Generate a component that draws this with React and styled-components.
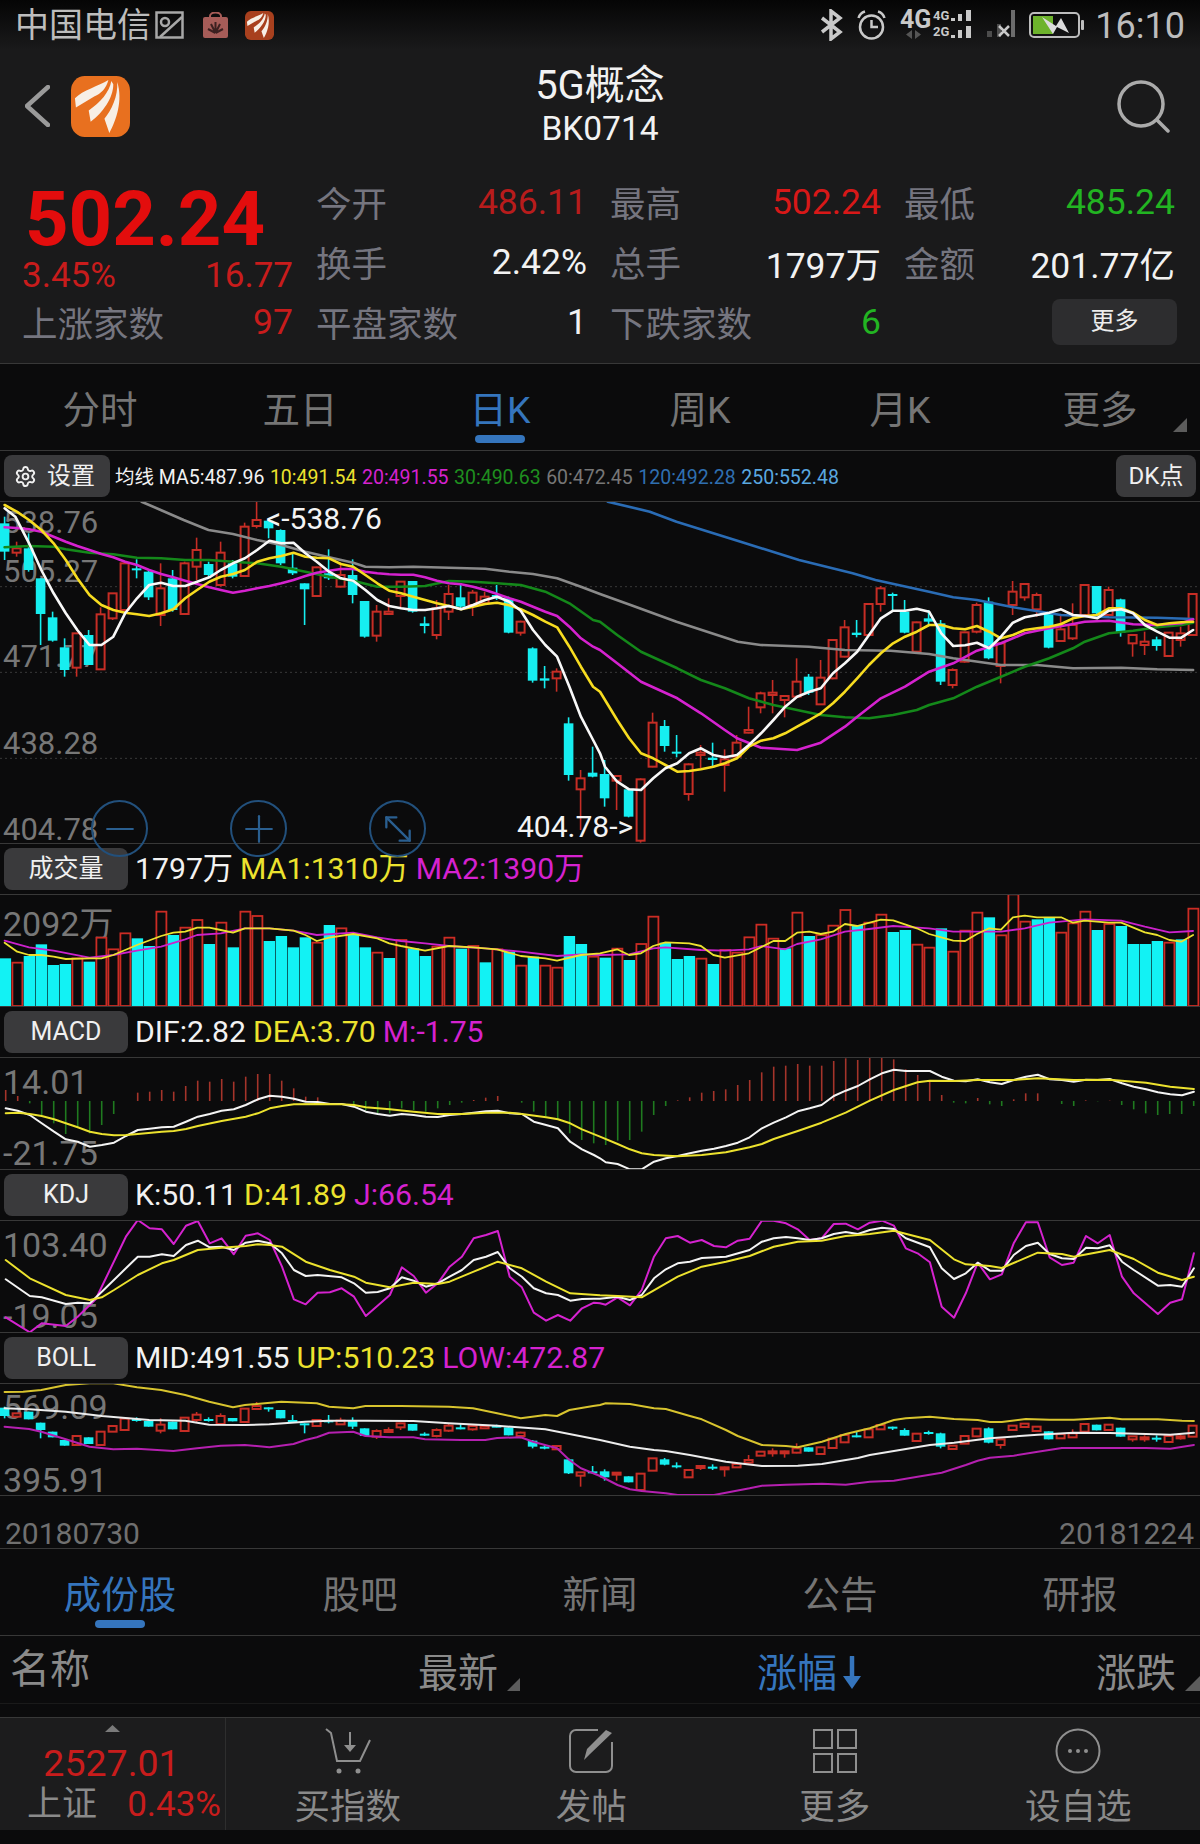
import React from 'react';
import styled, { createGlobalStyle } from 'styled-components';
import { Settings, Minus, Plus, MoveDiagonal2 } from 'lucide-react';

const RED = '#c81c1c';
const GREEN = '#22b422';
const BLUE = '#3575bd';
const YELLOW = '#ece22e';
const MAGENTA = '#d522cf';
const CHART_BG = '#0b0b0c';
const LINE = '#383838';

const GlobalStyle = createGlobalStyle`
  * { box-sizing: border-box; }
  html, body { margin: 0; padding: 0; background: #000; }
  body { font-family: Roboto, "Noto Sans CJK SC", sans-serif; }
`;

const Page = styled.div`
  width: 1200px;
  height: 1844px;
  overflow: hidden;
  background: ${CHART_BG};
`;

const TopPanel = styled.div`
  background: #1a1a1b;
`;

const StatusBar = styled.div`
  display: flex;
  align-items: center;
  height: 50px;
  padding: 0 15px 0 15px;
  background: linear-gradient(#050505, #1a1a1b);
  color: #bdbdbd;
`;

const Carrier = styled.span`
  font-size: 34px;
  line-height: 34px;
`;

const StatusIcon = styled.svg`
  display: block;
  flex: none;
  margin-left: ${(p) => p.$gap || 0}px;
`;

const StatusRight = styled.div`
  display: flex;
  align-items: center;
  gap: 14px;
  margin-left: auto;
`;

const Clock = styled.span`
  margin: 2px 0 0 -3px;
  font-size: 36px;
  line-height: 36px;
`;

const NavHeader = styled.div`
  position: relative;
  display: flex;
  align-items: center;
  justify-content: space-between;
  height: 120px;
  padding: 0 30px 8px 25px;
`;

const NavLeft = styled.div`
  display: flex;
  align-items: center;
  gap: 21px;
`;

const NavTitle = styled.div`
  position: absolute;
  left: 0;
  right: 0;
  top: 14px;
  text-align: center;
  color: #f2f2f2;
`;

const TitleMain = styled.div`
  font-size: 40px;
  line-height: 44px;
`;

const TitleCode = styled.div`
  font-size: 33.5px;
  line-height: 42px;
`;

const QuoteGrid = styled.div`
  display: grid;
  grid-template-columns: repeat(4, 271px);
  grid-template-rows: repeat(3, 60px);
  column-gap: 23px;
  padding: 2px 0 11px 22px;
  border-bottom: 1px solid ${LINE};
`;

const PriceCell = styled.div`
  grid-row: span 2;
  color: ${RED};
`;

const BigPrice = styled.div`
  margin-top: 9px;
  padding-left: 3px;
  font-size: 76px;
  line-height: 76px;
  font-weight: 700;
  color: #e30d0d;
`;

const ChangeRow = styled.div`
  display: flex;
  justify-content: space-between;
  font-size: 35px;
  line-height: 38px;
`;

const Cell = styled.div`
  display: flex;
  align-items: center;
  justify-content: space-between;
`;

const CellLabel = styled.span`
  margin-bottom: 2px;
  font-size: 35.5px;
  color: #75757f;
`;

const CellValue = styled.span`
  font-size: 35.5px;
  color: ${(p) => p.$color || '#f2f2f2'};
`;

const MoreButton = styled.div`
  justify-self: end;
  align-self: center;
  width: 125px;
  height: 46px;
  margin-right: -2px;
  border-radius: 8px;
  background: #2d2d2f;
  color: #ededed;
  font-size: 24px;
  line-height: 44px;
  text-align: center;
`;

const TabBar = styled.div`
  display: grid;
  grid-template-columns: repeat(${(p) => p.$count}, 1fr);
  height: 87px;
  border-bottom: 1px solid ${LINE};
`;

const Tab = styled.div`
  position: relative;
  display: flex;
  align-items: center;
  justify-content: center;
  padding-bottom: 2px;
  font-size: 37.5px;
  color: ${(p) => (p.$active ? BLUE : '#757575')};

  &::after {
    content: '';
    display: ${(p) => (p.$active ? 'block' : 'none')};
    position: absolute;
    left: 50%;
    top: 71px;
    width: 50px;
    height: 8px;
    margin-left: -25px;
    border-radius: 4px;
    background: ${BLUE};
  }
`;

const Corner = styled.i`
  display: block;
  flex: none;
  width: ${(p) => p.$size || 14}px;
  height: ${(p) => p.$size || 14}px;
  background: #5c5c5c;
  clip-path: polygon(100% 0, 100% 100%, 0 100%);
`;

const TabCorner = styled(Corner)`
  position: absolute;
  right: 13px;
  top: 54px;
`;

const MaRow = styled.div`
  display: flex;
  align-items: center;
  height: 51px;
  padding: 0 4px;
  border-bottom: 1px solid ${LINE};
`;

const Pill = styled.div`
  display: flex;
  align-items: center;
  justify-content: center;
  flex: none;
  gap: ${(p) => p.$gap || 0}px;
  width: ${(p) => p.$w}px;
  height: 42px;
  padding-right: ${(p) => p.$pr || 0}px;
  border-radius: 8px;
  background: #3a3a3c;
  color: #f0f0f0;
  font-size: 24px;
  line-height: 24px;
`;

const PaneTag = styled(Pill)`
  font-size: 25px;
`;

const MaText = styled.div`
  display: flex;
  gap: 5.5px;
  margin: 4px 0 0 5px;
  font-size: 19.5px;
  line-height: 24px;
  white-space: nowrap;
`;

const Tinted = styled.span`
  color: ${(p) => p.$color};
`;

const DkPill = styled(Pill)`
  margin-left: auto;
`;

const ChartBox = styled.div`
  position: relative;
  height: ${(p) => p.$h}px;
  border-bottom: 1px solid ${LINE};
`;

const ChartSvg = styled.svg`
  position: relative;
  z-index: 1;
  display: block;
`;

const AxisLabel = styled.span`
  position: absolute;
  left: 3px;
  top: ${(p) => p.$top}px;
  font-size: ${(p) => p.$size || 34}px;
  line-height: ${(p) => p.$size || 34}px;
  color: #777;
  white-space: nowrap;
`;

const Callout = styled.span`
  position: absolute;
  z-index: 2;
  left: ${(p) => p.$left}px;
  top: ${(p) => p.$top}px;
  font-size: 30px;
  line-height: 30px;
  color: #f4f4f4;
`;

const ZoomButton = styled.div`
  position: absolute;
  z-index: 3;
  left: ${(p) => p.$left}px;
  top: 298px;
  display: flex;
  align-items: center;
  justify-content: center;
  width: 57px;
  height: 57px;
  border: 2px solid #22507c;
  border-radius: 50%;
  color: #2a5f90;
`;

const PaneHead = styled.div`
  display: flex;
  align-items: center;
  gap: 7px;
  height: 51px;
  padding: 0 0 0 4px;
  border-bottom: 1px solid ${LINE};
`;

const PaneValues = styled.div`
  display: flex;
  gap: 7px;
  font-size: 30.2px;
  line-height: 36px;
  white-space: nowrap;
`;

const DateRow = styled.div`
  display: flex;
  align-items: center;
  justify-content: space-between;
  height: 53px;
  padding: 24px 6px 0 5px;
  border-bottom: 1px solid ${LINE};
  font-size: 30px;
  line-height: 30px;
  color: #707070;
`;

const ListHead = styled.div`
  display: grid;
  grid-template-columns: 418px 339px 339px 104px;
  height: 68px;
  border-bottom: 1px solid #1a1a1a;
  font-size: 40px;
  color: #8a8a8a;
`;

const ListName = styled.div`
  padding-left: 10px;
  line-height: 68px;
`;

const ListCol = styled.div`
  display: flex;
  align-items: flex-end;
  gap: 9px;
  padding-bottom: 13px;
  white-space: nowrap;
  color: ${(p) => p.$color || '#8a8a8a'};

  span {
    height: 52px;
    line-height: 70px;
  }
`;

const SortArrow = styled.svg`
  display: block;
  flex: none;
  margin: 0 0 1px -4px;
`;

const ListGap = styled.div`
  height: 13px;
`;

const BottomBar = styled.div`
  display: flex;
  height: 113px;
  border-top: 1px solid ${LINE};
  background: #1c1c1d;
`;

const IndexCell = styled.div`
  flex: none;
  width: 226px;
  padding-top: 7px;
  border-right: 1px solid #2e2e2e;
`;

const UpMark = styled.i`
  display: block;
  width: 15px;
  height: 7px;
  margin: 0 auto;
  background: #7a7a7a;
  clip-path: polygon(50% 0, 100% 100%, 0 100%);
`;

const IndexPrice = styled.div`
  margin-top: 13px;
  padding-right: 2px;
  font-size: 37.5px;
  line-height: 36px;
  text-align: center;
  color: ${RED};
`;

const IndexRow = styled.div`
  display: flex;
  justify-content: space-between;
  margin-top: 7px;
  padding: 0 4px 0 27px;
  font-size: 35px;
  line-height: 34px;
  color: #8a8a8a;
`;

const BottomNav = styled.div`
  display: grid;
  flex: 1;
  grid-template-columns: repeat(4, 1fr);
`;

const BottomItem = styled.div`
  display: flex;
  flex-direction: column;
  align-items: center;
  padding-top: 10px;
  color: #8a8a8a;
`;

const BottomLabel = styled.span`
  margin-top: 16px;
  font-size: 35.5px;
  line-height: 34px;
`;

// chart data is read off the reference, x from the 2.613x crops, y from the 3x crops
const SCALE_X = 2.6133;
const RIGHT_PART = 1568;
const W = 1200;

const toPoints = (left, right, shift) => {
  const out = [];
  for (let i = 0; i < left.length; i += 2) {
    out.push(`${(left[i] / SCALE_X).toFixed(1)},${(left[i + 1] / 3 - shift).toFixed(1)}`);
  }
  for (let i = 0; i < right.length; i += 2) {
    out.push(`${((right[i] + RIGHT_PART) / SCALE_X).toFixed(1)},${(right[i + 1] / 3 - shift).toFixed(1)}`);
  }
  return out.join(' ');
};

const Curve = ({ left = [], right = [], shift, color, width = 2 }) => (
  <polyline
    points={toPoints(left, right, shift)}
    fill="none"
    stroke={color}
    strokeWidth={width}
    strokeLinejoin="round"
    strokeLinecap="round"
  />
);

const candleX = (i) => 4.6 + 12 * i;

const Candles = ({ data, shift }) =>
  data.map(([up, high, top, bottom, low], i) => {
    const x = candleX(i);
    const color = up ? '#c62d25' : '#16eef0';
    const y1 = top / 3 - shift;
    const y2 = bottom / 3 - shift;
    return (
      <g key={i}>
        <line x1={x} x2={x} y1={high / 3 - shift} y2={low / 3 - shift} stroke={color} strokeWidth="1.6" />
        {up ? (
          <rect x={x - 4} y={y1} width="8" height={Math.max(y2 - y1, 2)} fill={CHART_BG} stroke={color} strokeWidth="2" />
        ) : (
          <rect x={x - 4.8} y={y1} width="9.6" height={Math.max(y2 - y1, 2)} fill={color} />
        )}
      </g>
    );
  });

const MAIN_CANDLES = [
  [0,440,460,545,570],[1,515,535,548,560],[0,490,535,600,605],[0,625,625,732,825],[0,725,742,812,815],
  [0,805,832,900,920],[1,790,790,893,920],[0,780,795,885,885],[1,712,733,898,900],[1,670,670,745,750],
  [1,575,580,720,725],[0,568,595,600,625],[0,600,605,682,690],[1,580,655,735,768],[0,600,625,720,725],
  [1,575,580,732,735],[1,503,540,590,630],[0,575,582,615,620],[1,515,548,645,650],[0,570,580,620,625],
  [1,458,470,618,620],[1,395,450,468,475],[0,445,452,475,505],[0,478,480,580,585],[0,550,593,610,615],
  [0,640,640,658,765],[1,590,592,678,680],[0,538,610,625,630],[1,578,615,650,652],[0,568,615,675,700],
  [0,693,693,800,803],[1,705,725,797,815],[1,685,725,732,735],[1,635,635,678,715],[0,633,633,725,728],
  [0,740,760,768,790],[1,690,715,795,808],[1,645,672,725,750],[0,640,682,710,720],[1,660,668,705,738],
  [1,665,680,700,705],[0,645,675,685,690],[0,680,685,788,790],[1,752,755,788,797],[0,832,835,932,938],
  [0,888,925,932,955],[1,895,905,925,965],[0,1042,1060,1215,1232],[1,1200,1225,1258,1380],[0,1130,1208,1220,1222],
  [0,1170,1212,1285,1310],[1,1215,1218,1232,1320],[0,1255,1258,1340,1342],[1,1225,1228,1412,1418],[1,1028,1058,1190,1192],
  [0,1050,1068,1128,1145],[0,1095,1145,1150,1162],[1,1180,1183,1272,1292],[1,1125,1148,1155,1195],[0,1118,1163,1170,1188],
  [1,1138,1168,1185,1265],[1,1095,1118,1160,1165],[1,1010,1080,1088,1090],[1,965,970,1012,1030],[1,930,968,975,1030],
  [1,975,978,990,1042],[1,865,935,980,982],[0,912,920,968,975],[1,870,923,1003,1005],[1,808,810,925,928],
  [1,750,772,860,862],[0,750,788,795,802],[1,700,702,795,798],[1,648,655,702,725],[0,668,672,677,720],
  [0,690,725,788,790],[1,755,757,845,848],[0,720,745,755,762],[0,750,760,935,945],[1,895,900,945,955],
  [1,785,787,875,878],[1,698,705,785,790],[0,682,695,865,868],[1,818,820,888,940],[1,633,665,705,735],
  [1,640,642,682,692],[1,668,675,718,740],[0,728,730,833,835],[1,735,778,813,815],[1,700,765,805,810],
  [1,643,645,735,737],[0,648,648,730,735],[1,650,660,735,738],[0,686,688,788,800],[1,793,795,820,860],
  [1,785,815,825,855],[0,800,808,828,842],[1,786,788,858,860],[1,770,790,810,830],[1,670,672,795,798],
];

const BOLL_CANDLES = [
  [0,230,233,258,265],[1,250,250,260,260],[0,245,245,268,268],[0,278,278,300,325],[0,305,305,322,322],
  [0,330,330,347,347],[1,318,318,345,345],[0,322,322,342,342],[1,305,305,345,345],[1,288,288,305,305],
  [1,266,266,300,300],[0,262,267,270,275],[0,273,273,290,290],[1,265,284,302,310],[0,275,275,298,298],
  [1,263,263,303,303],[1,246,254,270,278],[0,262,267,271,275],[1,250,258,282,285],[0,264,264,274,274],
  [1,236,236,276,276],[1,216,228,237,240],[0,232,232,238,245],[0,240,240,265,265],[0,255,270,272,273],
  [0,280,280,283,310],[1,270,270,288,288],[0,255,270,277,280],[1,263,272,283,285],[0,262,272,290,297],
  [0,295,295,318,318],[1,298,303,320,327],[1,292,300,302,305],[1,278,280,292,300],[0,282,282,302,302],
  [0,307,311,314,318],[1,295,300,318,322],[1,280,287,302,306],[0,280,292,297,298],[1,285,288,298,302],
  [1,285,288,295,297],[0,284,287,290,292],[0,292,292,316,316],[1,305,308,318,325],[0,330,332,350,355],
  [0,345,350,352,358],[1,348,348,358,358],[0,385,388,430,432],[1,427,427,437,470],[0,408,424,428,430],
  [0,418,424,442,452],[1,428,428,431,452],[0,439,439,457,457],[1,431,431,480,480],[1,385,385,422,422],
  [0,384,388,404,406],[0,397,406,408,415],[1,420,420,442,442],[1,405,408,412,420],[0,403,410,412,420],
  [1,410,412,418,440],[1,402,402,412,412],[1,375,390,398,400],[1,365,365,377,377],[1,355,364,368,380],
  [1,362,364,370,383],[1,340,355,368,370],[0,352,352,365,365],[1,352,352,372,372],[1,326,326,354,354],
  [1,315,315,337,337],[0,305,316,318,322],[1,298,298,322,322],[1,285,285,298,298],[0,290,290,292,300],
  [0,295,300,317,317],[1,311,311,333,333],[0,302,306,308,314],[0,308,310,350,355],[1,347,347,357,357],
  [1,318,318,341,341],[1,296,296,319,319],[0,292,295,338,340],[1,328,328,345,356],[1,287,287,300,300],
  [1,281,281,291,291],[1,290,290,303,303],[0,304,304,328,328],[1,312,312,325,325],[1,298,310,322,324],
  [1,282,282,305,305],[0,284,284,301,301],[1,284,284,300,300],[0,293,293,320,320],[1,319,319,328,335],
  [1,316,322,326,335],[0,316,323,326,335],[1,318,318,336,336],[1,314,319,325,329],[1,287,287,320,320],
];

const VOLUME = [
  [0,295],[1,308],[0,288],[0,253],[0,315],[0,312],[1,295],[0,305],[1,233],[1,268],
  [1,220],[0,235],[0,258],[1,155],[0,225],[1,203],[1,180],[0,252],[1,188],[0,262],
  [1,155],[1,168],[0,243],[0,228],[0,262],[0,232],[1,248],[0,195],[1,205],[0,222],
  [0,262],[1,278],[0,294],[1,240],[0,265],[0,288],[1,260],[1,233],[0,266],[1,258],
  [0,307],[1,268],[0,275],[1,317],[0,290],[1,317],[1,323],[0,228],[0,252],[1,290],
  [0,293],[1,266],[0,300],[1,252],[1,170],[0,248],[0,297],[0,288],[1,296],[0,312],
  [1,270],[1,278],[1,232],[1,194],[1,236],[0,265],[1,158],[0,228],[1,225],[1,197],
  [1,150],[0,195],[1,188],[1,164],[0,216],[0,210],[1,254],[1,263],[0,205],[1,275],
  [1,212],[1,158],[0,172],[1,226],[1,103],[1,185],[0,178],[0,172],[1,218],[1,190],
  [1,155],[0,210],[1,192],[0,198],[0,252],[0,252],[0,243],[1,248],[0,238],[1,146],
];

const MACD_BARS = [
  690,708,730,765,790,822,800,820,795,762,723,698,695,690,695,678,662,665,657,665,
  650,642,642,662,685,710,712,723,723,735,752,760,760,745,750,755,745,735,728,720,
  713,708,723,728,755,768,780,820,840,850,855,842,840,815,765,738,721,712,698,693,
  688,675,660,637,620,617,612,617,617,603,595,600,592,592,598,628,645,665,705,728,
  730,714,733,738,718,700,700,723,732,738,721,724,722,735,748,760,765,762,762,738,
];

const MA5 = {
  left: [12,415,40,440,76,520,108,600,140,670,172,730,202,780,234,825,265,825,296,800,327,730,358,685,390,645,421,638,453,648,484,648,515,635,547,622,577,600,609,580,640,565,672,540,704,512,735,520,767,518,798,550,828,575,860,605,891,625,923,632,955,660,986,690,1017,708,1048,715,1080,720,1111,720,1142,715,1173,708,1205,718,1236,705,1268,690,1299,680,1331,695,1361,722,1393,780,1425,825,1456,860,1488,950,1518,1040,1550,1110],
  right: [0,1150,13,1190,45,1235,76,1258,107,1260,139,1225,171,1195,202,1180,233,1150,264,1135,296,1155,326,1162,358,1155,389,1125,421,1090,453,1050,484,1010,515,980,547,965,577,955,609,910,640,880,672,845,703,795,734,745,766,722,797,722,828,716,860,725,892,790,923,828,954,826,985,818,1017,835,1048,800,1079,758,1110,742,1142,735,1174,728,1205,718,1236,735,1267,738,1299,745,1330,722,1362,718,1393,730,1424,765,1456,785,1488,803,1519,803,1550,780],
};
const MA10 = {
  left: [12,405,44,425,76,450,108,480,140,520,172,570,202,625,234,675,265,705,296,720,327,728,358,733,390,738,421,730,453,718,484,685,515,660,547,635,577,620,609,612,640,600,672,575,704,565,735,558,767,548,798,560,828,563,860,565,891,582,923,590,955,615,986,640,1017,662,1048,670,1080,680,1111,690,1142,700,1173,708,1205,718,1236,710,1268,702,1299,698,1331,706,1361,718,1393,735,1425,755,1456,772,1488,830,1518,890,1550,950],
  right: [0,965,45,1050,76,1105,107,1150,139,1165,171,1185,202,1205,233,1203,264,1198,296,1190,326,1180,358,1165,389,1130,421,1112,453,1105,484,1090,515,1070,547,1050,577,1030,609,1000,640,965,672,925,703,885,734,850,766,820,797,800,828,785,860,765,892,765,923,775,954,778,985,768,1017,785,1048,805,1079,795,1110,780,1142,775,1174,770,1205,762,1236,745,1267,738,1299,735,1330,715,1362,715,1393,728,1424,750,1456,765,1488,760,1519,757,1550,755],
};
const MA20 = {
  left: [12,472,44,474,76,478,108,485,140,500,172,515,202,528,234,540,265,552,296,562,327,575,358,585,390,600,421,612,453,622,484,632,515,642,547,652,577,660,609,668,640,662,672,655,704,648,735,640,767,630,798,618,828,608,860,602,891,597,923,597,955,605,986,610,1017,613,1048,614,1080,614,1111,622,1142,632,1173,640,1205,643,1236,650,1268,660,1299,672,1331,685,1361,695,1393,710,1425,725,1456,738,1488,770,1518,805,1550,830],
  right: [0,840,45,880,107,935,202,985,264,1030,326,1080,358,1105,421,1133,515,1140,577,1118,640,1070,672,1040,734,985,797,950,860,905,923,880,985,842,1048,820,1110,790,1174,775,1236,762,1267,755,1330,752,1393,763,1456,765,1519,760,1550,748],
};
const MA30 = {
  left: [12,532,76,528,140,530,172,538,234,548,296,553,358,563,421,565,484,570,547,570,609,575,672,580,735,590,798,605,860,620,923,632,986,650,1048,650,1111,648,1173,633,1236,635,1299,640,1361,645,1425,665,1488,700,1550,750],
  right: [0,755,45,795,107,845,202,895,264,930,326,955,389,985,453,1005,515,1020,577,1035,640,1042,703,1045,766,1035,828,1020,860,1005,923,985,985,950,1048,920,1110,890,1174,865,1236,835,1267,815,1330,790,1393,782,1456,772,1519,765,1550,758],
};
const MA60 = {
  left: [370,395,420,420,480,450,545,480,609,492,672,510,735,525,798,545,860,562,923,578,955,590,1017,592,1080,590,1173,593,1268,596,1331,605,1393,612,1456,625,1518,650,1568,672],
  right: [80,705,200,755,360,815,420,825,546,830,640,840,760,842,860,852,923,865,1048,885,1142,885,1236,895,1362,893,1456,898,1550,900],
};
const MA120 = {
  right: [20,395,130,425,200,455,380,520,520,570,660,610,720,630,860,665,923,682,985,690,1080,712,1205,735,1330,742,1456,743,1550,747],
};

const VOL_MA1 = {
  left: [12,248,45,275,76,285,108,285,140,290,172,297,234,295,265,295,296,285,358,255,421,228,453,218,484,215,515,203,547,203,577,210,609,218,640,205,672,205,704,205,767,212,798,225,828,243,860,233,923,222,986,235,1017,250,1048,258,1111,272,1173,258,1236,262,1299,268,1361,288,1425,295,1456,302,1518,285],
  right: [0,280,45,268,76,285,107,280,139,258,171,247,233,250,264,258,296,285,326,293,389,280,453,243,484,243,515,218,547,215,577,222,609,215,640,192,672,198,734,179,766,181,828,205,860,222,923,242,954,243,985,222,1017,205,1048,209,1079,172,1110,167,1142,172,1205,172,1236,188,1267,182,1330,188,1362,188,1424,217,1456,225,1488,240,1519,245,1550,225],
};
const VOL_MA2 = {
  left: [12,242,76,262,140,272,234,293,296,285,358,272,421,260,484,238,515,225,577,220,640,205,704,205,767,212,828,225,923,218,986,232,1048,243,1111,250,1173,258,1268,265,1361,275,1456,288,1518,283],
  right: [0,285,76,283,139,265,171,262,264,270,326,272,389,268,421,258,484,268,515,252,577,238,640,215,703,207,766,198,860,205,923,215,1048,215,1110,205,1174,188,1267,178,1362,182,1424,200,1488,217,1550,213],
};

const DIF = {
  left: [15,745,46,752,78,765,109,790,141,815,172,838,203,845,235,860,266,855,298,848,329,828,360,810,391,806,423,802,454,800,486,785,517,770,548,762,579,752,611,748,642,735,674,718,705,707,737,710,768,716,799,725,830,726,862,732,893,732,925,740,956,755,987,762,1019,767,1050,762,1081,765,1113,770,1144,771,1175,765,1207,762,1238,758,1270,754,1301,752,1332,760,1364,762,1395,785,1427,795,1458,805,1490,845,1521,868,1552,885],
  right: [0,895,15,907,46,912,78,928,109,928,141,905,172,895,203,888,235,880,266,872,298,866,329,858,360,848,391,832,423,805,454,788,486,772,517,754,548,745,579,735,611,708,642,692,674,678,705,658,737,640,768,629,799,633,862,633,893,650,925,662,956,664,987,658,1019,667,1050,672,1081,660,1113,650,1144,644,1175,658,1207,660,1238,665,1270,659,1301,660,1332,657,1364,670,1395,680,1427,688,1458,697,1490,703,1521,706,1552,695],
};
const DEA = {
  left: [15,760,46,758,78,762,109,768,141,778,172,790,203,802,235,815,266,822,298,826,329,825,360,822,423,815,454,813,486,807,517,798,579,783,642,770,674,760,705,745,737,738,768,733,830,732,893,733,925,735,956,742,1019,748,1081,755,1144,762,1207,762,1270,758,1332,758,1364,762,1427,772,1458,778,1490,790,1521,808],
  right: [0,830,46,852,78,868,109,880,141,885,203,889,266,885,329,877,391,862,423,852,454,837,517,813,579,788,642,758,705,722,768,690,830,667,862,662,925,663,987,660,1081,660,1144,655,1238,660,1332,659,1427,668,1490,680,1552,687],
};

const KDJ_K = {
  left: [15,1258,78,1308,109,1312,172,1332,203,1328,235,1330,266,1295,329,1225,360,1190,391,1190,423,1183,454,1188,486,1155,517,1142,548,1162,579,1160,611,1170,642,1148,674,1142,705,1150,737,1180,768,1230,799,1248,830,1245,893,1252,925,1270,956,1298,987,1296,1019,1285,1050,1252,1081,1262,1113,1280,1144,1270,1175,1250,1207,1230,1238,1200,1270,1190,1301,1176,1332,1225,1364,1250,1395,1285,1427,1300,1458,1305,1490,1322,1521,1317,1552,1316],
  right: [0,1316,46,1310,78,1320,109,1305,141,1255,172,1228,203,1210,235,1205,266,1194,329,1190,391,1170,423,1145,454,1135,486,1131,517,1135,548,1140,579,1135,611,1122,642,1116,674,1122,705,1110,737,1103,768,1107,799,1135,862,1162,893,1225,925,1257,956,1240,987,1208,1019,1232,1050,1232,1081,1185,1113,1158,1144,1148,1175,1182,1207,1195,1238,1197,1270,1163,1301,1165,1332,1156,1364,1205,1395,1230,1458,1277,1490,1275,1521,1280,1552,1225],
};
const KDJ_D = {
  left: [15,1200,78,1255,172,1305,235,1320,266,1312,298,1290,360,1245,423,1210,454,1200,517,1170,579,1163,642,1158,674,1153,705,1155,737,1160,799,1205,862,1230,925,1250,956,1268,1019,1282,1081,1268,1144,1272,1175,1265,1238,1235,1301,1205,1364,1225,1427,1265,1490,1300],
  right: [0,1306,46,1308,109,1312,203,1250,266,1220,329,1205,391,1188,454,1160,517,1145,579,1142,642,1128,705,1122,768,1112,862,1140,925,1198,956,1213,1019,1218,1050,1224,1144,1178,1207,1182,1238,1190,1332,1170,1395,1197,1458,1238,1521,1260,1552,1250],
};
const KDJ_J = {
  left: [15,1372,78,1417,109,1390,172,1398,203,1370,250,1318,329,1130,360,1080,391,1105,423,1108,454,1152,486,1097,517,1083,548,1150,579,1135,611,1183,642,1127,674,1120,705,1140,737,1220,768,1318,799,1333,830,1298,862,1297,893,1285,925,1310,956,1368,1019,1305,1050,1222,1081,1248,1113,1298,1144,1270,1175,1220,1207,1190,1238,1135,1270,1125,1301,1113,1332,1250,1364,1282,1395,1358,1427,1382,1458,1365,1490,1382,1521,1345,1552,1328],
  right: [0,1330,15,1334,46,1312,78,1336,109,1290,141,1190,172,1135,203,1128,235,1148,266,1140,298,1158,329,1162,360,1142,391,1136,423,1082,454,1082,486,1090,517,1108,548,1140,579,1135,611,1092,642,1091,674,1108,705,1088,737,1082,768,1097,799,1165,830,1180,862,1207,893,1340,925,1373,956,1300,987,1208,1019,1258,1050,1243,1081,1150,1113,1087,1144,1087,1175,1192,1207,1215,1238,1208,1270,1128,1301,1150,1332,1125,1364,1250,1395,1300,1458,1362,1490,1328,1521,1318,1552,1180],
};

const BOLL_UP = {
  left: [12,186,60,185,108,180,172,165,234,160,296,160,358,172,421,180,484,195,547,215,609,232,640,225,735,215,828,220,860,230,923,235,955,228,1048,228,1173,230,1236,235,1299,250,1361,265,1425,255,1456,258,1488,240,1550,228],
  right: [0,225,15,220,78,222,141,235,172,237,235,258,266,268,329,300,360,318,423,345,486,348,517,352,580,335,642,312,705,295,768,270,799,265,862,260,925,267,987,270,1019,276,1050,276,1113,267,1175,269,1238,269,1332,263,1364,268,1458,268,1521,272,1552,273],
};
const BOLL_MID = {
  left: [12,235,78,238,172,245,266,258,390,270,484,272,547,284,640,285,704,283,798,275,860,272,955,272,1080,273,1173,280,1299,287,1425,298,1488,312],
  right: [0,330,78,350,141,360,172,363,235,375,329,395,423,408,517,407,580,402,674,384,705,375,768,363,862,345,925,338,1019,325,1144,314,1238,308,1332,309,1427,312,1490,314,1552,308],
};
const BOLL_LOW = {
  left: [12,290,76,297,108,305,172,328,234,350,296,358,358,356,453,363,515,355,577,347,640,345,704,352,767,342,798,330,828,322,860,308,923,305,955,318,1017,322,1080,322,1111,328,1205,330,1268,330,1299,324,1361,322,1393,335,1456,355,1488,390,1518,415],
  right: [0,438,46,465,78,478,109,483,172,490,203,495,298,495,329,488,391,475,423,467,486,464,580,461,642,464,705,455,768,452,830,440,893,428,956,405,987,392,1019,383,1081,377,1144,365,1207,354,1332,354,1427,354,1490,356,1552,345],
};

const FanPaths = () => (
  <>
    <path d="M4 22C12 14 28 10 38 4C36 12 30 18 24 20L5 31Z" fill="#f7efe6" />
    <path d="M41 5C39 16 30 26 18 34L20 45C32 36 43 22 43 8Z" fill="#f7efe6" />
    <path d="M47 6C48 20 41 34 34 42L39 56C46 44 53 24 47 6Z" fill="#f7efe6" />
  </>
);

const StatusRow = () => (
  <StatusBar>
    <Carrier>中国电信</Carrier>
    <StatusIcon $gap={4} width="29" height="28" viewBox="0 0 29 28" fill="none" stroke="#a8a8a8" strokeWidth="2.5">
      <rect x="1.5" y="1.5" width="26" height="25" />
      <circle cx="10" cy="11" r="4" />
      <path d="M27 6L5 26" />
    </StatusIcon>
    <StatusIcon $gap={19} width="25" height="26" viewBox="0 0 25 26">
      <rect x="0" y="5" width="25" height="21" rx="2" fill="#a65c58" />
      <path d="M7 7V4a5.500 3.500 0 0 1 11 0V7" fill="none" stroke="#a65c58" strokeWidth="2" />
      <path d="M12.500 21L8 12M12.500 21L12.500 10M12.500 21L17 12M12.500 21L5 17M12.500 21L20 17" stroke="#3c2020" strokeWidth="2" />
    </StatusIcon>
    <StatusIcon $gap={17} width="29" height="29" viewBox="0 0 60 60">
      <rect width="60" height="60" rx="12" fill="#a8401e" />
      <FanPaths />
    </StatusIcon>
    <StatusRight>
      <StatusIcon width="23" height="32" viewBox="0 0 23 32" fill="none" stroke="#c9c9c9" strokeWidth="3.5">
        <path d="M2 9L20 23L11 30V2L20 9L2 23" />
      </StatusIcon>
      <StatusIcon width="29" height="30" viewBox="0 0 29 30" fill="none" stroke="#c9c9c9" strokeWidth="2.500">
        <circle cx="14.500" cy="17" r="11.500" />
        <path d="M14.500 10V17H21" />
        <path d="M1.500 8Q3 3 8 1.500M27.500 8Q26 3 21 1.500" />
      </StatusIcon>
      <StatusIcon width="73" height="40" viewBox="0 -4 73 40" fontFamily="Roboto, sans-serif" fontWeight="700" fill="#c9c9c9">
        <text x="0" y="19" fontSize="25">4G</text>
        <text x="33" y="11" fontSize="13">4G</text>
        <text x="33" y="27" fontSize="13">2G</text>
        <path d="M12 21V30L6 25.500ZM15 21V30L21 25.500Z" fill="#555" />
        <path d="M51 9h4v3h-4zM58 5h4v7h-4zM66 1h5v11h-5zM51 26h4v3h-4zM58 21h4v8h-4zM66 17h5v12h-5z" />
      </StatusIcon>
      <StatusIcon width="28" height="32" viewBox="0 0 28 32">
        <rect x="0" y="22" width="5" height="6" fill="#4c4c4c" />
        <rect x="10" y="15" width="4" height="13" fill="#4c4c4c" />
        <rect x="24" y="1" width="4" height="27" fill="#6c6c6c" />
        <path d="M12 17L22 27M22 17L12 27" stroke="#c9c9c9" strokeWidth="2.500" />
      </StatusIcon>
      <StatusIcon width="55" height="26" viewBox="0 0 55 26">
        <rect x="1" y="1" width="49" height="24" rx="4" fill="none" stroke="#bdbdbd" strokeWidth="2" />
        <rect x="52" y="8" width="3" height="10" rx="1" fill="#bdbdbd" />
        <rect x="4" y="4" width="20" height="18" fill="#6db32c" />
        <path d="M13 5L27 14L32 6L40 21L28 15L24 22Z" fill="#dcdcdc" />
      </StatusIcon>
      <Clock>16:10</Clock>
    </StatusRight>
  </StatusBar>
);

const TopHeader = () => (
  <NavHeader>
    <NavLeft>
      <svg width="25" height="42" viewBox="0 0 25 42" fill="none" stroke="#9a9a9a" strokeWidth="4.500" strokeLinecap="round" strokeLinejoin="round">
        <path d="M23 2L2 21L23 40" />
      </svg>
      <svg width="59" height="61" viewBox="0 0 60 60" preserveAspectRatio="none">
        <rect width="60" height="60" rx="14" fill="#e8701f" />
        <FanPaths />
      </svg>
    </NavLeft>
    <NavTitle>
      <TitleMain>5G概念</TitleMain>
      <TitleCode>BK0714</TitleCode>
    </NavTitle>
    <svg width="54" height="54" viewBox="0 0 54 54" fill="none" stroke="#ababab" strokeWidth="3.500" strokeLinecap="round">
      <circle cx="25" cy="25" r="22" />
      <path d="M41 41L52 52" />
    </svg>
  </NavHeader>
);

const QuoteBlock = () => (
  <QuoteGrid>
    <PriceCell>
      <BigPrice>502.24</BigPrice>
      <ChangeRow>
        <span>3.45%</span>
        <span>16.77</span>
      </ChangeRow>
    </PriceCell>
    <Cell><CellLabel>今开</CellLabel><CellValue $color="#b81c1c">486.11</CellValue></Cell>
    <Cell><CellLabel>最高</CellLabel><CellValue $color="#d81818">502.24</CellValue></Cell>
    <Cell><CellLabel>最低</CellLabel><CellValue $color={GREEN}>485.24</CellValue></Cell>
    <Cell><CellLabel>换手</CellLabel><CellValue>2.42%</CellValue></Cell>
    <Cell><CellLabel>总手</CellLabel><CellValue>1797万</CellValue></Cell>
    <Cell><CellLabel>金额</CellLabel><CellValue>201.77亿</CellValue></Cell>
    <Cell><CellLabel>上涨家数</CellLabel><CellValue $color={RED}>97</CellValue></Cell>
    <Cell><CellLabel>平盘家数</CellLabel><CellValue>1</CellValue></Cell>
    <Cell><CellLabel>下跌家数</CellLabel><CellValue $color={GREEN}>6</CellValue></Cell>
    <MoreButton>更多</MoreButton>
  </QuoteGrid>
);

const PeriodTabs = () => (
  <TabBar $count={6}>
    <Tab>分时</Tab>
    <Tab>五日</Tab>
    <Tab $active>日K</Tab>
    <Tab>周K</Tab>
    <Tab>月K</Tab>
    <Tab>更多<TabCorner /></Tab>
  </TabBar>
);

const MaSummary = () => (
  <MaRow>
    <Pill $w={106} $gap={10} $pr={5}>
      <Settings size={23} strokeWidth={2} />
      设置
    </Pill>
    <MaText>
      <Tinted $color="#f2f2f2">均线 MA5:487.96</Tinted>
      <Tinted $color={YELLOW}>10:491.54</Tinted>
      <Tinted $color={MAGENTA}>20:491.55</Tinted>
      <Tinted $color="#1f8f1f">30:490.63</Tinted>
      <Tinted $color="#777">60:472.45</Tinted>
      <Tinted $color="#2f6fb0">120:492.28</Tinted>
      <Tinted $color="#5aa8e0">250:552.48</Tinted>
    </MaText>
    <DkPill $w={80}>DK点</DkPill>
  </MaRow>
);

const MainChart = () => {
  const shift = 132;
  return (
    <ChartBox $h={342}>
      <AxisLabel $size={31} $top={5}>538.76</AxisLabel>
      <AxisLabel $size={31} $top={54}>505.27</AxisLabel>
      <AxisLabel $size={31} $top={139}>471.77</AxisLabel>
      <AxisLabel $size={31} $top={226}>438.28</AxisLabel>
      <AxisLabel $size={31} $top={312}>404.78</AxisLabel>
      <ChartSvg width={W} height="341" viewBox="0 0 1200 341">
        {[650, 907, 1165].map((y) => (
          <line key={y} x1="0" x2={W} y1={y / 3 - shift} y2={y / 3 - shift} stroke="#3a3a3a" strokeDasharray="2 3" />
        ))}
        <Candles data={MAIN_CANDLES} shift={shift} />
        <Curve {...MA120} shift={shift} color="#2a6cb5" width={2.6} />
        <Curve {...MA60} shift={shift} color="#8a8a8a" width={2.6} />
        <Curve {...MA30} shift={shift} color="#14881a" width={2.6} />
        <Curve {...MA20} shift={shift} color={MAGENTA} width={2.6} />
        <Curve {...MA10} shift={shift} color="#f7dc20" width={2.6} />
        <Curve {...MA5} shift={shift} color="#f8f8f8" width={2.6} />
      </ChartSvg>
      <Callout $left={266} $top={2}>{'<-538.76'}</Callout>
      <Callout $left={517} $top={310}>{'404.78->'}</Callout>
      <ZoomButton $left={91}><Minus size={44} strokeWidth={1.2} /></ZoomButton>
      <ZoomButton $left={230}><Plus size={44} strokeWidth={1.2} /></ZoomButton>
      <ZoomButton $left={369}><MoveDiagonal2 size={40} strokeWidth={1.4} /></ZoomButton>
    </ChartBox>
  );
};

const VolumeChart = () => {
  const shift = 35;
  const base = 438 / 3 - shift;
  return (
    <ChartBox $h={112}>
      <AxisLabel $top={12}>2092万</AxisLabel>
      <ChartSvg width={W} height="111" viewBox="0 0 1200 111">
        {VOLUME.map(([up, top], i) => {
          const x = 5.4 + 12 * i;
          const y = top / 3 - shift;
          return up ? (
            <rect key={i} x={x - 5} y={y} width="10" height={base - y} fill={CHART_BG} stroke="#cc2c24" strokeWidth="1.8" />
          ) : (
            <rect key={i} x={x - 5.700} y={y} width="11.400" height={base - y + 1} fill="#12f2f4" />
          );
        })}
        <Curve {...VOL_MA2} shift={shift} color="#cc22cc" width={1.8} />
        <Curve {...VOL_MA1} shift={shift} color={YELLOW} width={1.8} />
      </ChartSvg>
    </ChartBox>
  );
};

const MacdChart = () => {
  const shift = 198;
  const zero = 723 / 3 - shift;
  return (
    <ChartBox $h={112}>
      <AxisLabel $top={7}>14.01</AxisLabel>
      <AxisLabel $top={78}>-21.75</AxisLabel>
      <ChartSvg width={W} height="111" viewBox="0 0 1200 111">
        {MACD_BARS.map((end, i) => {
          const x = 5.7 + 12 * i;
          return (
            <line
              key={i}
              x1={x}
              x2={x}
              y1={zero}
              y2={end / 3 - shift}
              stroke={end < 723 ? '#a5342a' : '#1f7a1f'}
              strokeWidth="1.6"
            />
          );
        })}
        <Curve {...DIF} shift={shift} color="#f4f4f4" width={2} />
        <Curve {...DEA} shift={shift} color={YELLOW} width={2} />
      </ChartSvg>
    </ChartBox>
  );
};

const KdjChart = () => {
  const shift = 361;
  return (
    <ChartBox $h={112}>
      <AxisLabel $top={7}>103.40</AxisLabel>
      <AxisLabel $top={78}>-19.05</AxisLabel>
      <ChartSvg width={W} height="111" viewBox="0 0 1200 111">
        <Curve {...KDJ_J} shift={shift} color={MAGENTA} width={2} />
        <Curve {...KDJ_K} shift={shift} color="#f4f4f4" width={2} />
        <Curve {...KDJ_D} shift={shift} color={YELLOW} width={2} />
      </ChartSvg>
    </ChartBox>
  );
};

const BollChart = () => {
  const shift = 54;
  return (
    <ChartBox $h={112}>
      <AxisLabel $top={6}>569.09</AxisLabel>
      <AxisLabel $top={79}>395.91</AxisLabel>
      <ChartSvg width={W} height="111" viewBox="0 0 1200 111">
        <Candles data={BOLL_CANDLES} shift={shift} />
        <Curve {...BOLL_LOW} shift={shift} color="#b520b0" width={2} />
        <Curve {...BOLL_MID} shift={shift} color="#ececec" width={2} />
        <Curve {...BOLL_UP} shift={shift} color="#d8c42e" width={2} />
      </ChartSvg>
    </ChartBox>
  );
};

const Pane = ({ name, values, children }) => (
  <>
    <PaneHead>
      <PaneTag $w={124}>{name}</PaneTag>
      <PaneValues>
        {values.map(([text, color]) => (
          <Tinted key={text} $color={color}>{text}</Tinted>
        ))}
      </PaneValues>
    </PaneHead>
    {children}
  </>
);

const BottomTabs = () => (
  <TabBar $count={5}>
    <Tab $active>成份股</Tab>
    <Tab>股吧</Tab>
    <Tab>新闻</Tab>
    <Tab>公告</Tab>
    <Tab>研报</Tab>
  </TabBar>
);

const ListHeader = () => (
  <ListHead>
    <ListName>名称</ListName>
    <ListCol><span>最新</span><Corner $size={13} /></ListCol>
    <ListCol $color={BLUE}>
      <span>涨幅</span>
      <SortArrow width="20" height="34" viewBox="0 0 20 34">
        <path d="M10 1V22" stroke={BLUE} strokeWidth="4.500" strokeLinecap="round" />
        <path d="M1 20H19L10 33Z" fill={BLUE} />
      </SortArrow>
    </ListCol>
    <ListCol><span>涨跌</span><Corner $size={15} /></ListCol>
  </ListHead>
);

const NavIcon = ({ children }) => (
  <svg width="46" height="46" viewBox="0 0 46 46" fill="none" stroke="#8f8f8f" strokeWidth="2">
    {children}
  </svg>
);

const Footer = () => (
  <BottomBar>
    <IndexCell>
      <UpMark />
      <IndexPrice>2527.01</IndexPrice>
      <IndexRow>
        <span>上证</span>
        <Tinted $color={RED}>0.43%</Tinted>
      </IndexRow>
    </IndexCell>
    <BottomNav>
      <BottomItem>
        <NavIcon>
          <path d="M1 1L6 5L12 33H35L45 12" />
          <path d="M25 4V18" />
          <path d="M19 17H31L25 24Z" fill="#8f8f8f" stroke="none" />
          <circle cx="14" cy="43" r="2.500" fill="#8f8f8f" stroke="none" />
          <circle cx="33" cy="43" r="2.500" fill="#8f8f8f" stroke="none" />
        </NavIcon>
        <BottomLabel>买指数</BottomLabel>
      </BottomItem>
      <BottomItem>
        <NavIcon>
          <path d="M30 2H8a6 6 0 0 0 -6 6V38a6 6 0 0 0 6 6H38a6 6 0 0 0 6 -6V14" />
          <path d="M16 32L19 21L38 2L44 5L22 26Z" fill="#8f8f8f" stroke="none" />
        </NavIcon>
        <BottomLabel>发帖</BottomLabel>
      </BottomItem>
      <BottomItem>
        <NavIcon>
          <rect x="2" y="2" width="18" height="18" />
          <rect x="26" y="2" width="18" height="18" />
          <rect x="2" y="26" width="18" height="18" />
          <rect x="26" y="26" width="18" height="18" />
        </NavIcon>
        <BottomLabel>更多</BottomLabel>
      </BottomItem>
      <BottomItem>
        <NavIcon>
          <circle cx="23" cy="23" r="21.500" />
          <circle cx="15" cy="23" r="2" fill="#8f8f8f" stroke="none" />
          <circle cx="23" cy="23" r="2" fill="#8f8f8f" stroke="none" />
          <circle cx="31" cy="23" r="2" fill="#8f8f8f" stroke="none" />
        </NavIcon>
        <BottomLabel>设自选</BottomLabel>
      </BottomItem>
    </BottomNav>
  </BottomBar>
);

export default function App() {
  return (
    <Page>
      <GlobalStyle />
      <TopPanel>
        <StatusRow />
        <TopHeader />
        <QuoteBlock />
      </TopPanel>
      <PeriodTabs />
      <MaSummary />
      <MainChart />
      <Pane name="成交量" values={[['1797万', '#f2f2f2'], ['MA1:1310万', YELLOW], ['MA2:1390万', MAGENTA]]}>
        <VolumeChart />
      </Pane>
      <Pane name="MACD" values={[['DIF:2.82', '#f2f2f2'], ['DEA:3.70', YELLOW], ['M:-1.75', MAGENTA]]}>
        <MacdChart />
      </Pane>
      <Pane name="KDJ" values={[['K:50.11', '#f2f2f2'], ['D:41.89', YELLOW], ['J:66.54', MAGENTA]]}>
        <KdjChart />
      </Pane>
      <Pane name="BOLL" values={[['MID:491.55', '#f2f2f2'], ['UP:510.23', YELLOW], ['LOW:472.87', MAGENTA]]}>
        <BollChart />
      </Pane>
      <DateRow>
        <span>20180730</span>
        <span>20181224</span>
      </DateRow>
      <BottomTabs />
      <ListHeader />
      <ListGap />
      <Footer />
    </Page>
  );
}
